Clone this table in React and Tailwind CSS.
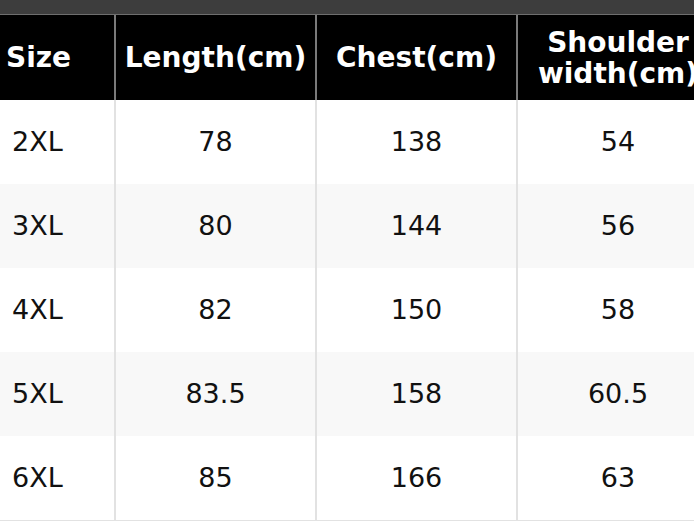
const rows = [
  ['2XL', '78', '138', '54'],
  ['3XL', '80', '144', '56'],
  ['4XL', '82', '150', '58'],
  ['5XL', '83.5', '158', '60.5'],
  ['6XL', '85', '166', '63'],
]

const App = () => {
  return (
    <div className="w-[694px] h-[521px] overflow-hidden bg-white" style={{ fontFamily: '"DejaVu Sans", Verdana, sans-serif' }}>
      <div className="h-[15px] bg-[#3d3d3d] border-b border-[#6e6e6e]" />
      <div className="w-[718px]">
        {/* Header */}
        <div className="grid grid-cols-[114px_201px_201px_202px] h-[85px] bg-black text-white font-bold text-[28px] leading-[31px]">
          <div className="flex items-center pl-[6px]">Size</div>
          <div className="flex items-center justify-center border-l-2 border-[#7a7a7a]">Length(cm)</div>
          <div className="flex items-center justify-center border-l-2 border-[#7a7a7a]">Chest(cm)</div>
          <div className="flex items-center justify-center text-center border-l-2 border-[#7a7a7a]">
            Shoulder<br />width(cm)
          </div>
        </div>
        {/* Body */}
        {rows.map((r, i) => (
          <div
            key={r[0]}
            className={`grid grid-cols-[114px_201px_201px_202px] h-[84px] text-[27px] text-[#111] ${i % 2 === 1 ? 'bg-[#f8f8f8]' : 'bg-white'}`}
          >
            <div className="flex items-center pl-[12px]">{r[0]}</div>
            <div className="flex items-center justify-center border-l-2 border-[#e2e2e2]">{r[1]}</div>
            <div className="flex items-center justify-center border-l-2 border-[#e2e2e2]">{r[2]}</div>
            <div className="flex items-center justify-center border-l-2 border-[#e2e2e2]">{r[3]}</div>
          </div>
        ))}
        <div className="h-[2px] bg-[#e2e2e2]" />
      </div>
    </div>
  )
}

export default App
